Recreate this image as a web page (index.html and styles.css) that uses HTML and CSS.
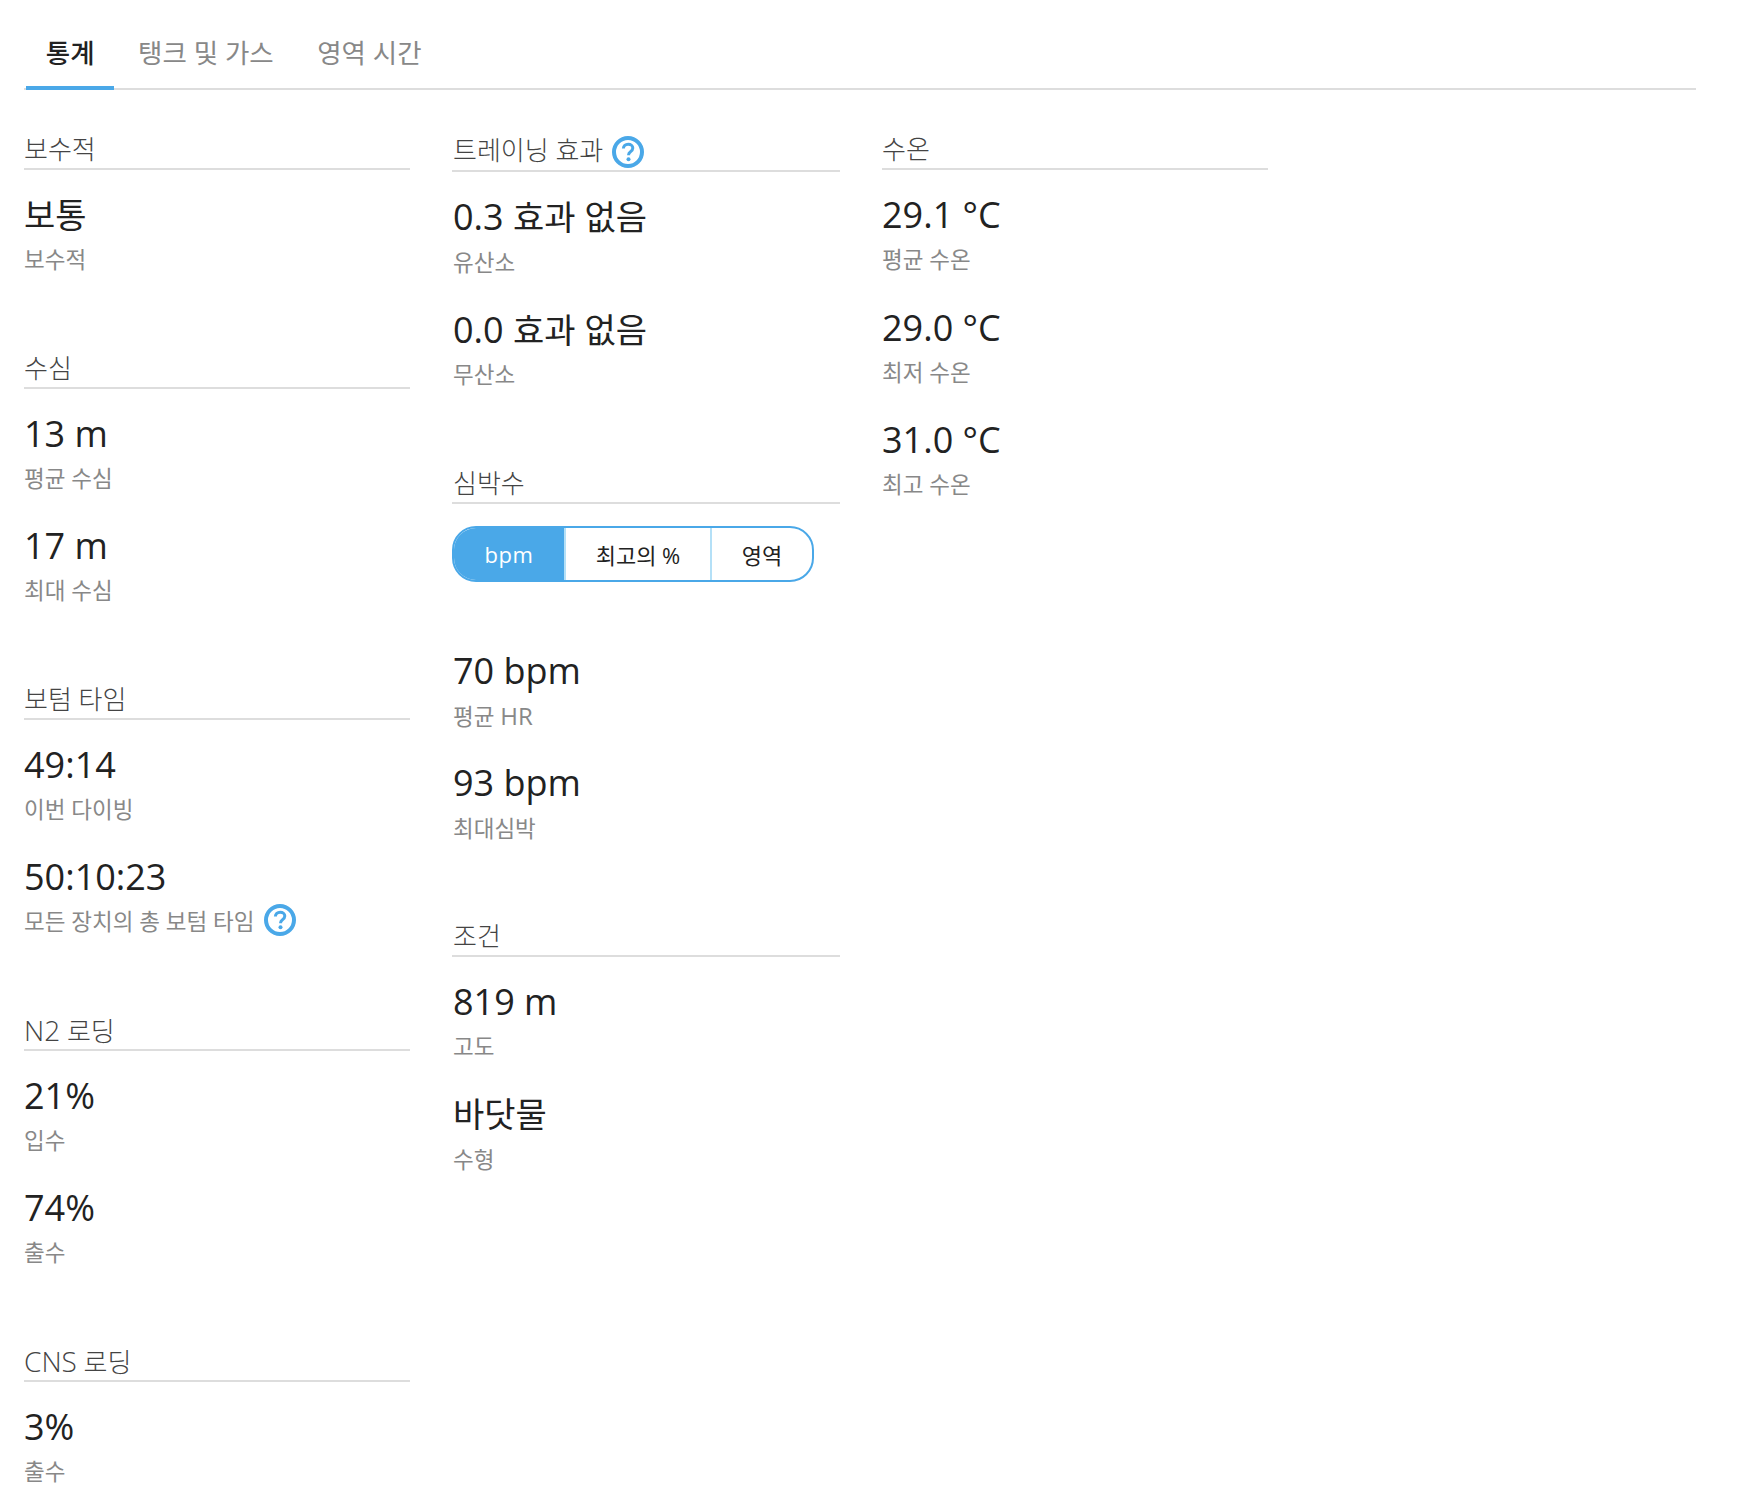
FILE: index.html
```html
<!DOCTYPE html>
<html lang="ko">
<head>
<meta charset="utf-8">
<title>다이빙 통계</title>
<link rel="stylesheet" href="styles.css">
</head>
<body>
<svg class="defs" width="0" height="0" aria-hidden="true">
  <symbol id="help" viewBox="0 0 32 32">
    <circle cx="16" cy="16" r="14" fill="none" stroke="#4aa8e8" stroke-width="4"/>
    <path d="M11.4 12.6c0-2.7 2-4.4 4.8-4.4 2.7 0 4.6 1.6 4.6 3.9 0 1.7-.9 2.7-2.3 3.6-1.3.9-1.9 1.5-1.9 3v.5" fill="none" stroke="#4aa8e8" stroke-width="3"/>
    <circle cx="16.5" cy="23.2" r="2" fill="#4aa8e8"/>
  </symbol>
</svg>
<nav class="tabs">
  <a class="tab active">통계</a>
  <a class="tab">탱크 및 가스</a>
  <a class="tab">영역 시간</a>
</nav>
<main class="columns">
  <div class="column">
    <section class="section">
      <h3 class="title">보수적</h3>
      <div class="item"><div class="value"><span class="ko">보통</span></div><div class="label">보수적</div></div>
    </section>
    <section class="section">
      <h3 class="title">수심</h3>
      <div class="item"><div class="value">13 m</div><div class="label">평균 수심</div></div>
      <div class="item"><div class="value">17 m</div><div class="label">최대 수심</div></div>
    </section>
    <section class="section">
      <h3 class="title">보텀 타임</h3>
      <div class="item"><div class="value">49:14</div><div class="label">이번 다이빙</div></div>
      <div class="item"><div class="value">50:10:23</div><div class="label">모든 장치의 총 보텀 타임 <svg class="help"><use href="#help"/></svg></div></div>
    </section>
    <section class="section">
      <h3 class="title"><span class="title-latin">N2</span> 로딩</h3>
      <div class="item"><div class="value">21%</div><div class="label">입수</div></div>
      <div class="item"><div class="value">74%</div><div class="label">출수</div></div>
    </section>
    <section class="section">
      <h3 class="title"><span class="title-latin">CNS</span> 로딩</h3>
      <div class="item"><div class="value">3%</div><div class="label">출수</div></div>
    </section>
  </div>
  <div class="column column-mid">
    <section class="section section-effect">
      <h3 class="title title-help">트레이닝 효과 <svg class="help"><use href="#help"/></svg></h3>
      <div class="item"><div class="value">0.3 <span class="ko">효과 없음</span></div><div class="label">유산소</div></div>
      <div class="item"><div class="value">0.0 <span class="ko">효과 없음</span></div><div class="label">무산소</div></div>
    </section>
    <section class="section">
      <h3 class="title">심박수</h3>
      <div class="segments">
        <span class="segment on">bpm</span>
        <span class="segment mid">최고의 %</span>
        <span class="segment last">영역</span>
      </div>
      <div class="item"><div class="value">70 bpm</div><div class="label"><span>평균 <span class="label-latin">HR</span></span></div></div>
      <div class="item"><div class="value">93 bpm</div><div class="label">최대심박</div></div>
    </section>
    <section class="section">
      <h3 class="title">조건</h3>
      <div class="item"><div class="value">819 m</div><div class="label">고도</div></div>
      <div class="item"><div class="value"><span class="ko">바닷물</span></div><div class="label">수형</div></div>
    </section>
  </div>
  <div class="column">
    <section class="section">
      <h3 class="title">수온</h3>
      <div class="item"><div class="value">29.1 °C</div><div class="label">평균 수온</div></div>
      <div class="item"><div class="value">29.0 °C</div><div class="label">최저 수온</div></div>
      <div class="item"><div class="value">31.0 °C</div><div class="label">최고 수온</div></div>
    </section>
  </div>
</main>
</body>
</html>
```
FILE: styles.css
```css
* { box-sizing: border-box; }
html, body { margin: 0; padding: 0; background: #fff; }
body {
  width: 1758px;
  height: 1498px;
  overflow: hidden;
  font-family: "Open Sans", "Noto Sans CJK KR", sans-serif;
  color: #222;
}
.defs { position: absolute; }
.tabs {
  display: flex;
  gap: 4px;
  height: 90px;
  margin: 0 62px 0 24px;
  padding: 33px 0 0 2px;
  border-bottom: 2px solid #ddd;
}
.tab {
  height: 57px;
  padding: 0 19.75px;
  font-size: 26.5px;
  line-height: 41px;
  color: #888;
}
.tab.active {
  color: #222;
  font-weight: 500;
  border-bottom: 4px solid #4aa8e8;
}
.columns {
  display: grid;
  grid-template-columns: 386px 388px 386px;
  column-gap: 42px;
  padding: 40px 0 0 24px;
}
.section { margin-bottom: 75.5px; }
.section-effect { margin-bottom: 76.5px; }
.title {
  height: 40px;
  margin: 0 0 20px;
  font-size: 26px;
  font-weight: 300;
  line-height: 38px;
  color: #444;
  border-bottom: 2px solid #ddd;
}
.title-latin { font-size: 28px; }
.title-help { display: flex; align-items: center; gap: 9px; height: 42px; }
.title-help .help { margin-top: 3px; }
.column-mid .value,
.column-mid .label,
.column-mid .title { padding-left: 1px; }
.item { height: 83px; margin-bottom: 29.5px; }
.section:last-child .item:last-child { margin-bottom: 0; }
.value {
  height: 46px;
  font-size: 36px;
  line-height: 50px;
  color: #222;
}
.ko { font-size: 34px; }
.label {
  display: flex;
  align-items: center;
  gap: 10px;
  height: 30px;
  margin-top: 9px;
  font-size: 22.5px;
  line-height: 30px;
  color: #888;
}
.column-mid .label { margin-top: 9.5px; }
.label-latin { font-size: 24px; }
.help { width: 32px; height: 32px; flex: none; }
.label .help { margin-top: -5px; }
.segments {
  display: flex;
  width: 362px;
  height: 56px;
  margin: 21.5px 0 64px;
  border: 2px solid #4aa8e8;
  border-radius: 24px;
  overflow: hidden;
}
.segment {
  display: flex;
  align-items: center;
  justify-content: center;
  font-size: 22px;
  color: #222;
}
.segment.on {
  width: 114px;
  margin-left: -2px;
  padding-left: 2px;
  background: #4aa8e8;
  color: #fff;
  letter-spacing: .5px;
  border-right: 2px solid #b4e0f7;
}
.segment.mid { width: 146px; border-right: 2px solid #b4e0f7; }
.segment.last { flex: 1; }
```
